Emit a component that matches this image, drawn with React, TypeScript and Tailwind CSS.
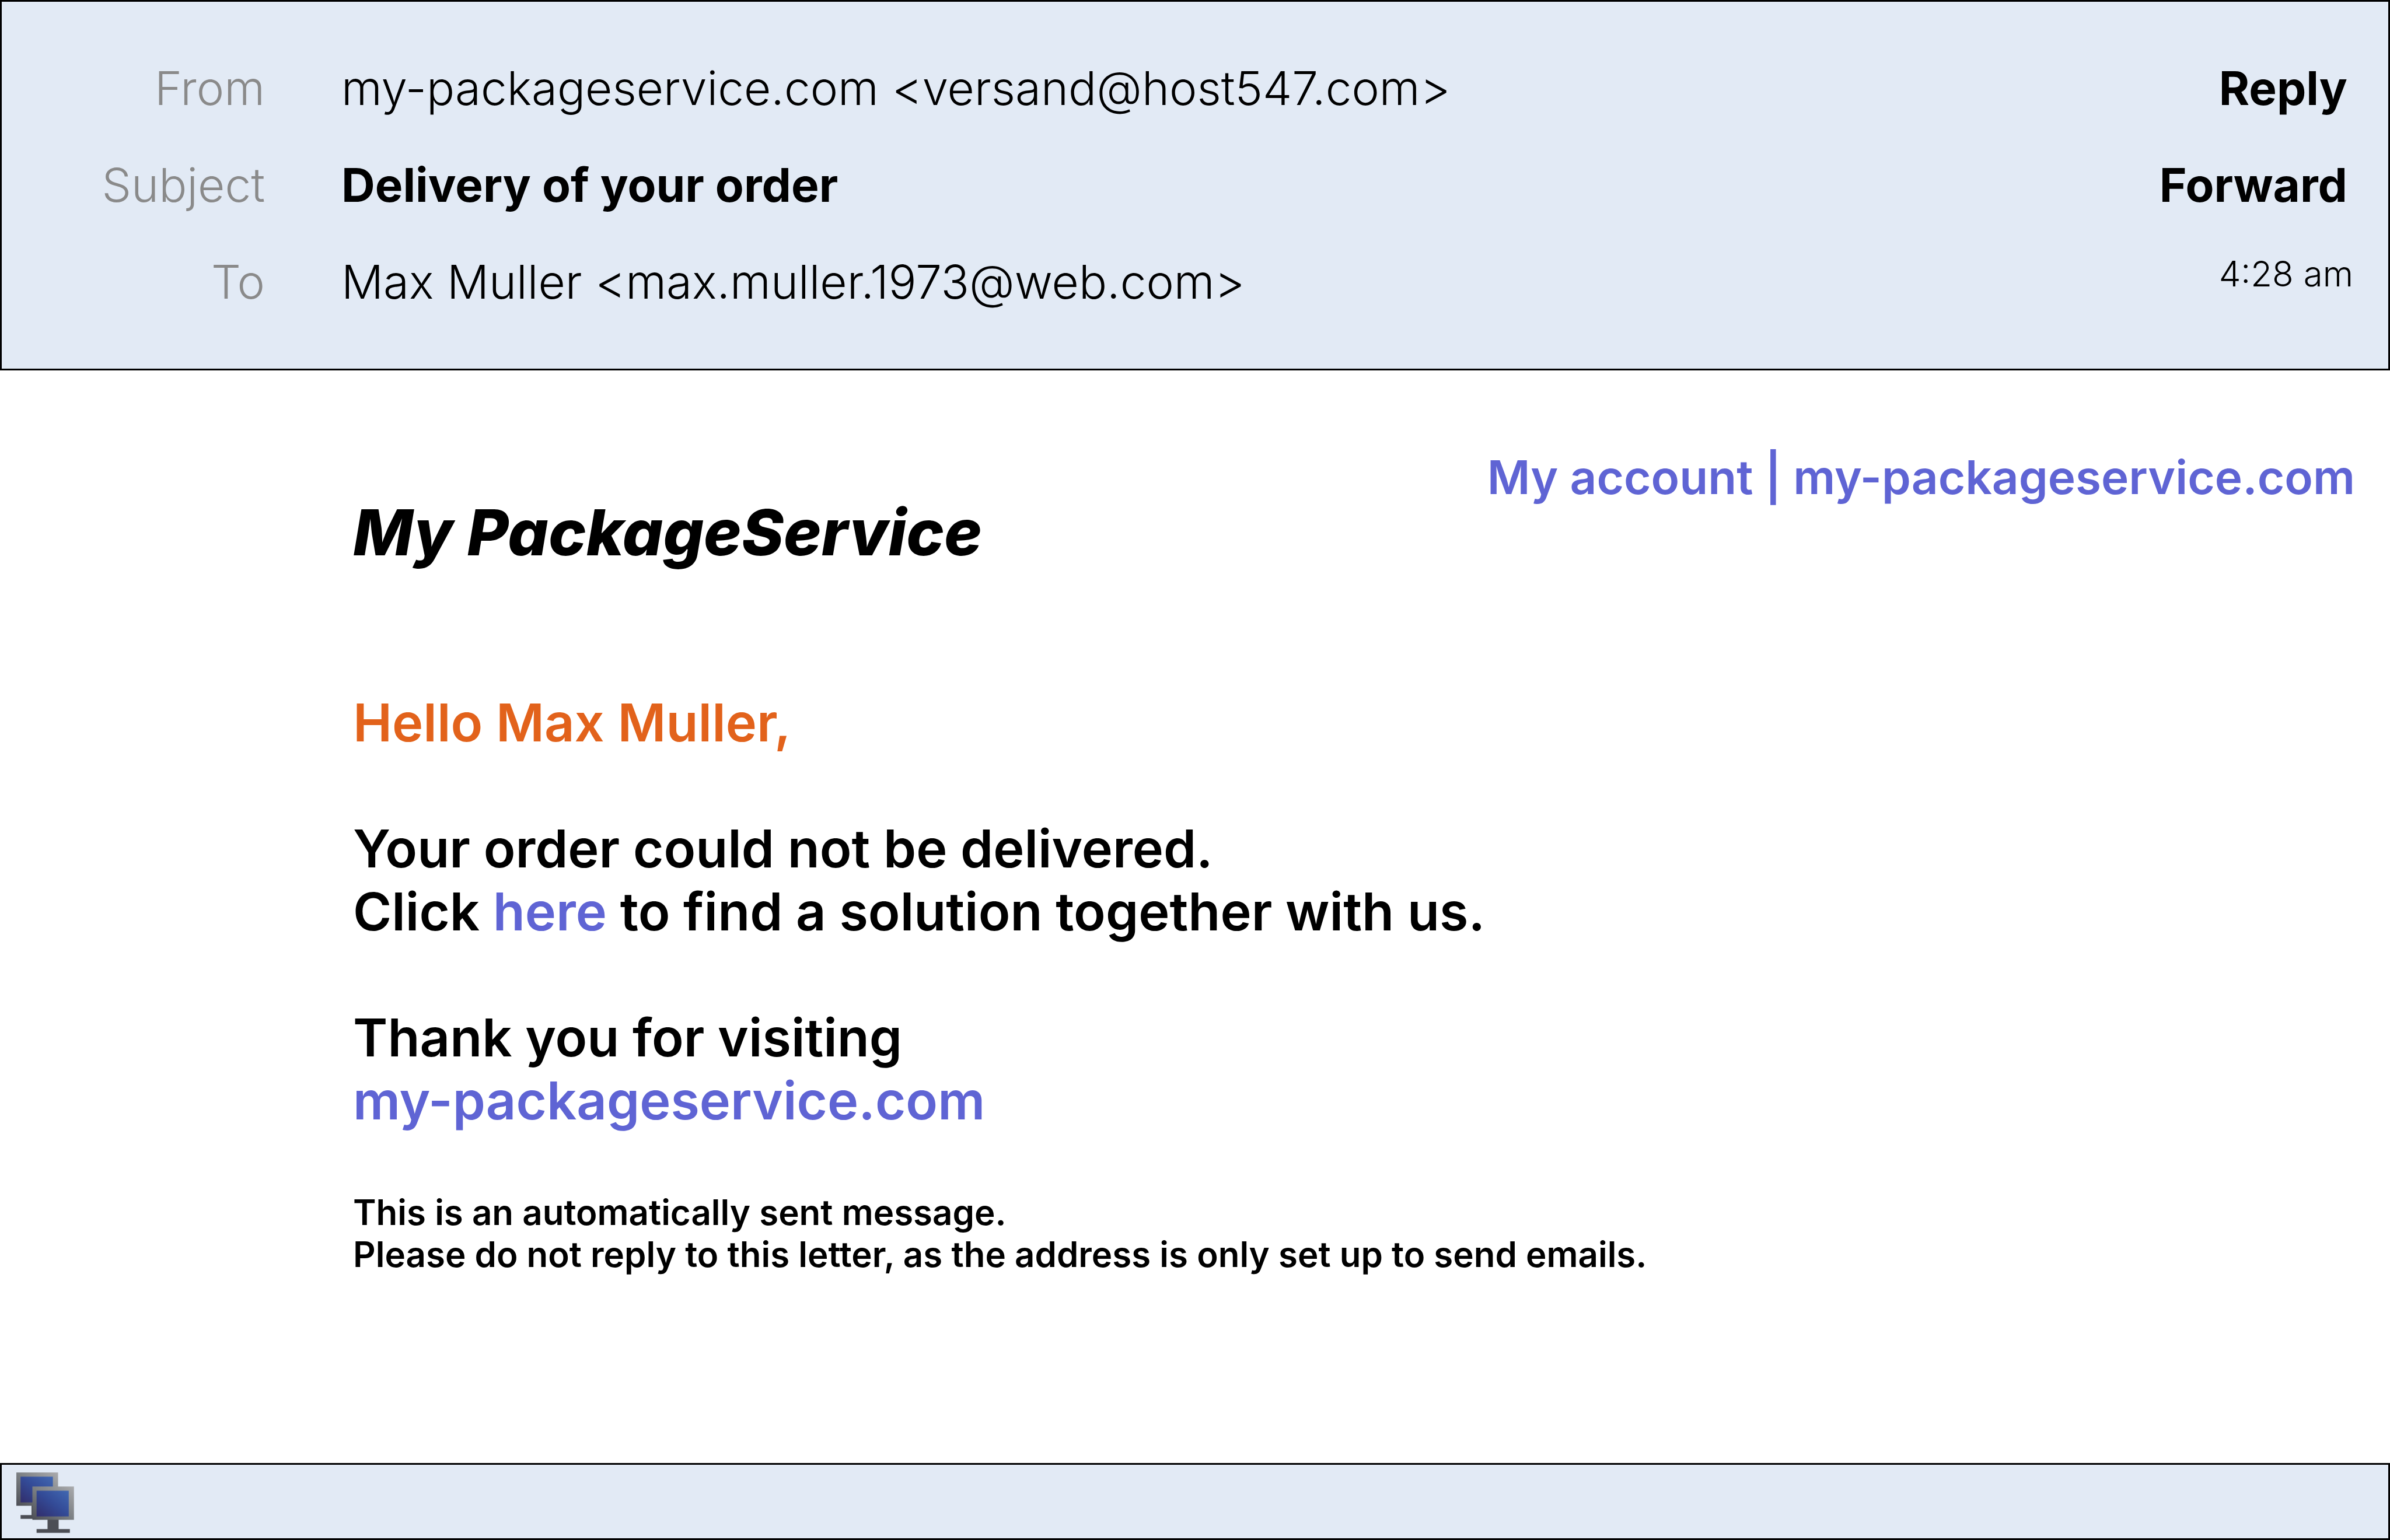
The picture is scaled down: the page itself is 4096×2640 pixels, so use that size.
import React from "react";

const headers = [
  { label: "From", value: "my-packageservice.com <versand@host547.com>", weight: "font-light" },
  { label: "Subject", value: "Delivery of your order", weight: "font-bold" },
  { label: "To", value: "Max Muller <max.muller.1973@web.com>", weight: "font-light" },
];

function MonitorsIcon() {
  return (
    <svg viewBox="118 136 411 432" className="h-[104px] w-[99px]" role="img" aria-label="Network">
      <defs>
        <linearGradient id="frame" x1="0" y1="1" x2="1" y2="0">
          <stop offset="0" stopColor="#4c4e55" />
          <stop offset="0.5" stopColor="#7b7f83" />
          <stop offset="1" stopColor="#aaabad" />
        </linearGradient>
        <linearGradient id="screen" x1="0" y1="1" x2="1" y2="0">
          <stop offset="0" stopColor="#312d6b" />
          <stop offset="0.5" stopColor="#334a96" />
          <stop offset="1" stopColor="#4168b2" />
        </linearGradient>
      </defs>
      <path d="M226 372H300V467H148V440H226Z" fill="#4c4e55" />
      <rect x="118" y="137" width="297" height="237" fill="url(#frame)" />
      <rect x="148" y="167" width="230" height="183" fill="url(#screen)" />
      <path d="M340 470H419V540H499V567H262V540H340Z" fill="#4c4e55" />
      <rect x="232" y="237" width="296" height="237" fill="url(#frame)" />
      <rect x="262" y="267" width="229" height="183" fill="url(#screen)" />
    </svg>
  );
}

export default function App() {
  return (
    <div className="flex min-h-screen flex-col bg-white font-['Inter',sans-serif] text-black">
      <header className="flex justify-between border-[3px] border-black bg-[#e2eaf5] pt-[65px] pb-[66px]">
        <dl className="text-[80px] leading-[166px]">
          {headers.map((h) => (
            <div key={h.label} className="flex gap-[131px]">
              <dt className="w-[451px] text-right font-light text-[#8a8a8a]">{h.label}</dt>
              <dd className={h.weight}>{h.value}</dd>
            </div>
          ))}
        </dl>
        <div className="flex flex-col items-end pr-[60px]">
          <div className="flex flex-col items-end pr-[10px] text-[80px] leading-[166px] font-bold">
            <button type="button">Reply</button>
            <button type="button">Forward</button>
          </div>
          <time className="text-[60px] leading-[138px] font-light">4:28 am</time>
        </div>
      </header>

      <main className="flex-1 pt-[135px]">
        <nav className="flex justify-end gap-[20px] pr-[60px] text-[80px] leading-[96px] font-semibold text-[#5f64d4]">
          <a href="#account">My account</a>
          <span>|</span>
          <a href="#home">my-packageservice.com</a>
        </nav>
        <div className="-mt-5 pl-[605px] text-[90px] leading-[108px] font-semibold">
          <h1 className="text-[109px] leading-[132px] font-extrabold italic">My PackageService</h1>
          <p className="mt-[207px] text-[#e2621b]">Hello Max Muller,</p>
          <p className="mt-[108px]">
            Your order could not be delivered.
            <br />
            Click <a href="#solution" className="text-[#5f64d4]">here</a> to find a solution together with us.
          </p>
          <p className="mt-[108px]">
            Thank you for visiting
            <br />
            <a href="#home" className="text-[#5f64d4]">my-packageservice.com</a>
          </p>
          <p className="mt-[101px] text-[60px] leading-[72px]">
            This is an automatically sent message.
            <br />
            Please do not reply to this letter, as the address is only set up to send emails.
          </p>
        </div>
      </main>

      <footer className="border-[3px] border-black bg-[#e2eaf5] px-[25px] pt-[13px] pb-[9px]">
        <MonitorsIcon />
      </footer>
    </div>
  );
}
